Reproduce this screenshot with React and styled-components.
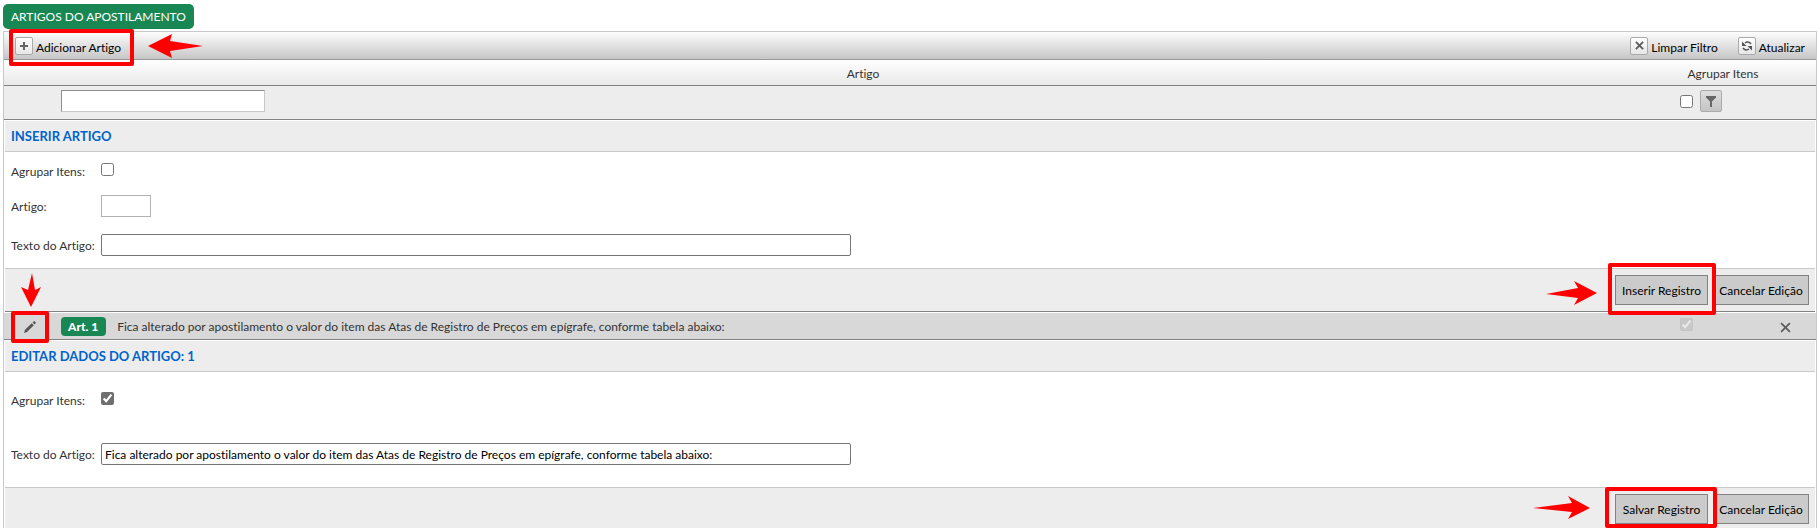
import React, { useState } from 'react';
import styled, { createGlobalStyle } from 'styled-components';

const GlobalStyle = createGlobalStyle`
  html {
    overflow: hidden;
  }
  body {
    margin: 0;
    background: #fff;
    color: #333;
    font-family: Lato, "Open Sans", sans-serif;
    font-size: 12px;
    line-height: 16px;
    font-variant-ligatures: none;
  }
  *, *::before, *::after {
    box-sizing: border-box;
  }
  input, button {
    font: inherit;
    font-variant-ligatures: none;
    margin: 0;
  }
`;

const Page = styled.main`
  padding: 4px 2px 0 3px;
`;

const SectionBadge = styled.h1`
  display: table;
  margin: 0 0 2px;
  padding: 1px 8px 0;
  border-radius: 5px;
  background: #198754;
  color: #fff;
  font-size: 12px;
  font-weight: 400;
  line-height: 24px;
`;

const Grid = styled.section`
  border: 1px solid #c9c9c9;
`;

const Toolbar = styled.div`
  display: flex;
  justify-content: space-between;
  align-items: center;
  height: 28px;
  padding: 0 11px;
  border-bottom: 1px solid #999;
  background: linear-gradient(#fdfdfd, #c6c6c6);
`;

const ToolGroup = styled.div`
  display: flex;
  gap: 20px;
`;

const ToolButton = styled.button`
  position: relative;
  display: flex;
  align-items: flex-start;
  gap: 3px;
  height: 18px;
  padding: 0;
  border: 0;
  background: none;
  color: #000;
  white-space: nowrap;

  span {
    padding-top: 3px;
  }
`;

const IconBox = styled.i`
  display: grid;
  place-items: center;
  width: 18px;
  height: 18px;
  border: 1px solid #aaa;
  border-radius: 2px;
  background: linear-gradient(#fff, #e6e6e6);
`;

const Table = styled.table`
  width: 100%;
  table-layout: fixed;
  border-collapse: separate;
  border-spacing: 0;
`;

const Col = styled.col`
  width: ${(props) => props.$width};
`;

const HeadCell = styled.th`
  height: 26px;
  padding: 2px 0 0;
  border-bottom: 1px solid #828282;
  background: linear-gradient(#fff, #e9e9e9);
  font-weight: 400;
  text-align: center;
`;

const FilterCell = styled.td`
  height: 34px;
  padding: 4px 8px 0 7px;
  border-bottom: 1px solid #828282;
  background: #ededed;
  vertical-align: top;
`;

const Cell = styled.td`
  height: 28px;
  padding: 0 8px 0 7px;
  border-top: 1px solid #fff;
  border-bottom: 1px solid #828282;
  background: #d8d8d8;
  vertical-align: middle;
`;

const FormCell = styled.td`
  padding: 1px 1px 0;
`;

const FilterInput = styled.input`
  display: block;
  width: 204px;
  height: 22px;
  margin-left: 1px;
  padding: 0 4px;
  border: 1px solid;
  border-color: #8e8e8e #c9c9c9 #c9c9c9 #8e8e8e;
  background: #fff;
`;

const FilterTools = styled.div`
  display: flex;
  align-items: center;
  gap: 7px;
`;

const Check = styled.input`
  display: block;
  flex: none;
  width: 13px;
  height: 13px;
  accent-color: #6f6f6f;

  &:disabled {
    margin-bottom: 4px;
  }
`;

const FilterButton = styled.button`
  display: grid;
  place-items: center;
  width: 22px;
  height: 22px;
  padding: 0;
  border: 1px solid #aaa;
  border-radius: 2px;
  background: linear-gradient(#dedede, #c4c4c4);
`;

const RowContent = styled.div`
  display: flex;
  align-items: center;
  gap: 11px;
  padding-left: 1px;

  span {
    padding-top: 2px;
  }
`;

const ArtBadge = styled.strong`
  padding: 0 8px 0 7px;
  border-radius: 4px;
  background: #198754;
  color: #fff;
  font-weight: 900;
  line-height: 19px;
`;

const RowButton = styled.button`
  position: relative;
  display: grid;
  place-items: center;
  width: ${(props) => props.$width};
  height: 22px;
  padding: 2px 1px 0 0;
  border: 0;
  background: none;
`;

const FormTitle = styled.h2`
  margin: 0;
  padding: 0 6px;
  border-bottom: 1px solid #c9c9c9;
  background: #ededed;
  color: #0063cc;
  font-size: 13px;
  font-weight: 700;
  line-height: 30px;
`;

const Fields = styled.div`
  display: flex;
  flex-direction: column;
  gap: ${(props) => (props.$loose ? '36px' : '17px')};
  padding: ${(props) => (props.$loose ? '17px 6px 22px' : '8px 6px 12px')};
`;

const Field = styled.div`
  display: grid;
  grid-template-columns: 90px 1fr;
  align-items: center;
  height: ${(props) => (props.$check ? '18px' : '22px')};

  label {
    padding-top: ${(props) => (props.$check ? '4px' : '2px')};
    white-space: nowrap;
  }
  ${Check} {
    margin-bottom: 2px;
  }
`;

const ShortInput = styled.input`
  width: 50px;
  height: 22px;
  border: 1px solid #b2b2b2;
`;

const LongInput = styled.input`
  width: 100%;
  max-width: 750px;
  height: 22px;
  padding: 1px 3px;
  border: 1px solid #767676;
  border-radius: 2px;
  color: #000;
`;

const FormFooter = styled.div`
  display: flex;
  justify-content: flex-end;
  gap: 5px;
  height: 44px;
  padding: 6px;
  border-top: 1px solid #c9c9c9;
  border-bottom: 1px solid #828282;
  background: #ededed;
`;

const FormButton = styled.button`
  position: relative;
  min-width: ${(props) => (props.$wide ? '96px' : '93px')};
  height: 30px;
  padding: 2px 0 0;
  border: 1px solid #828282;
  background: #cbcbcb;
  color: #000;
  white-space: nowrap;
`;

// red frame drawn over a control, grown outwards by $inset
const Frame = styled.span`
  && {
    position: absolute;
    inset: ${(props) => props.$inset};
    padding: 0;
    border: 4px solid #f00;
    border-radius: 2px;
    pointer-events: none;
    z-index: 1;
  }
`;

const ArrowSvg = styled.svg`
  position: absolute;
  ${(props) => props.$place};
  pointer-events: none;
  z-index: 2;
`;

const arrows = {
  left: { w: 55, h: 24, d: 'M55 12 L22 7 L24 0 L0 12 L24 24 L22 17 Z' },
  right: { w: 51, h: 24, d: 'M0 13 L32 7 L28 0 L51 12 L28 24 L32 17 Z' },
  longRight: { w: 57, h: 23, d: 'M0 12 L39 7 L35 0 L57 12 L35 23 L39 16 Z' },
  down: { w: 20, h: 34, d: 'M11 0 L14 17 L20 14 L10 34 L0 14 L7 17 Z' },
};

function Arrow({ kind, place }) {
  const { w, h, d } = arrows[kind];
  return (
    <ArrowSvg $place={place} width={w} height={h} viewBox={`0 0 ${w} ${h}`} fill="#f00" aria-hidden="true">
      <path d={d} />
    </ArrowSvg>
  );
}

const PlusIcon = () => (
  <svg width="10" height="10" viewBox="0 0 10 10" fill="#666">
    <path d="M4 1h2v3h3v2H6v3H4V6H1V4h3z" />
  </svg>
);

const CrossIcon = ({ size = 10, weight = 2 }) => (
  <svg width={size} height={size} viewBox="0 0 10 10" fill="none" stroke="#5a5a5a" strokeWidth={weight}>
    <path d="M1 1l8 8M9 1l-8 8" />
  </svg>
);

const RefreshIcon = () => (
  <svg width="12" height="12" viewBox="0 0 12 12" fill="none" stroke="#555" strokeWidth="1.5">
    <path d="M4 3C6 1.500 8.500 1.800 10 4M8 9C6 10.500 3.500 10.200 2 8" />
    <path d="M1 1.500v4.500h4.500zM11 10.500V6H6.500z" fill="#555" stroke="none" />
  </svg>
);

const FunnelIcon = () => (
  <svg width="12" height="12" viewBox="0 0 12 12" fill="#666">
    <path d="M1 1h10v1.500L7 6.500V12H5V6.500L1 2.500z" />
  </svg>
);

const PencilIcon = () => (
  <svg width="14" height="14" viewBox="0 0 14 14" fill="#555">
    <path d="M1 13l1-3.200L8.800 3.200l2 2L4 12z" />
    <path d="M9.600 2.400l1.600-1.400 1.800 1.800-1.400 1.600z" />
  </svg>
);

const texto = 'Fica alterado por apostilamento o valor do item das Atas de Registro de Preços em epígrafe, conforme tabela abaixo:';

const App = () => {
  const [novoAgrupar, setNovoAgrupar] = useState(false);
  const [agrupar, setAgrupar] = useState(true);
  const [textoArtigo, setTextoArtigo] = useState(texto);

  return (
    <Page>
      <GlobalStyle />
      <SectionBadge>ARTIGOS DO APOSTILAMENTO</SectionBadge>
      <Grid>
        <Toolbar>
          <ToolButton type="button">
            <IconBox><PlusIcon /></IconBox>
            <span>Adicionar Artigo</span>
            <Frame $inset="-8px -13px -11px -6px" />
            <Arrow kind="left" place="left: calc(100% + 27px); top: -3px" />
          </ToolButton>
          <ToolGroup>
            <ToolButton type="button">
              <IconBox><CrossIcon size={9} /></IconBox>
              <span>Limpar Filtro</span>
            </ToolButton>
            <ToolButton type="button">
              <IconBox><RefreshIcon /></IconBox>
              <span>Atualizar</span>
            </ToolButton>
          </ToolGroup>
        </Toolbar>

        <Table>
          <colgroup>
            <Col $width="49px" />
            <Col />
            <Col $width="100px" />
            <Col $width="43px" />
          </colgroup>
          <thead>
            <tr>
              <HeadCell />
              <HeadCell scope="col">Artigo</HeadCell>
              <HeadCell scope="col">Agrupar Itens</HeadCell>
              <HeadCell />
            </tr>
          </thead>
          <tbody>
            <tr>
              <FilterCell />
              <FilterCell>
                <FilterInput type="text" aria-label="Filtrar artigo" />
              </FilterCell>
              <FilterCell>
                <FilterTools>
                  <Check type="checkbox" aria-label="Filtrar agrupar itens" />
                  <FilterButton type="button" aria-label="Filtrar"><FunnelIcon /></FilterButton>
                </FilterTools>
              </FilterCell>
              <FilterCell />
            </tr>

            <tr>
              <FormCell colSpan={4}>
                <FormTitle>INSERIR ARTIGO</FormTitle>
                <Fields>
                  <Field $check>
                    <label htmlFor="novo-agrupar">Agrupar Itens:</label>
                    <Check
                      id="novo-agrupar"
                      type="checkbox"
                      checked={novoAgrupar}
                      onChange={(e) => setNovoAgrupar(e.target.checked)}
                    />
                  </Field>
                  <Field>
                    <label htmlFor="novo-artigo">Artigo:</label>
                    <ShortInput id="novo-artigo" type="text" />
                  </Field>
                  <Field>
                    <label htmlFor="novo-texto">Texto do Artigo:</label>
                    <LongInput id="novo-texto" type="text" />
                  </Field>
                </Fields>
                <FormFooter>
                  <FormButton type="button">
                    Inserir Registro
                    <Frame $inset="-13px -9px -11px -8px" />
                    <Arrow kind="right" place="right: calc(100% + 19px); top: 5px" />
                  </FormButton>
                  <FormButton type="button" $wide>Cancelar Edição</FormButton>
                </FormFooter>
              </FormCell>
            </tr>

            <tr>
              <Cell>
                <RowButton type="button" $width="38px" aria-label="Editar">
                  <PencilIcon />
                  <Frame $inset="-4px 0 -6px 0" />
                  <Arrow kind="down" place="left: 10px; bottom: calc(100% + 8px)" />
                </RowButton>
              </Cell>
              <Cell>
                <RowContent>
                  <ArtBadge>Art. 1</ArtBadge>
                  <span>{texto}</span>
                </RowContent>
              </Cell>
              <Cell>
                <Check type="checkbox" checked disabled readOnly aria-label="Agrupar itens" />
              </Cell>
              <Cell>
                <RowButton type="button" $width="12px" aria-label="Excluir">
                  <CrossIcon size={11} weight={1.5} />
                </RowButton>
              </Cell>
            </tr>

            <tr>
              <FormCell colSpan={4}>
                <FormTitle>EDITAR DADOS DO ARTIGO: 1</FormTitle>
                <Fields $loose>
                  <Field $check>
                    <label htmlFor="agrupar">Agrupar Itens:</label>
                    <Check
                      id="agrupar"
                      type="checkbox"
                      checked={agrupar}
                      onChange={(e) => setAgrupar(e.target.checked)}
                    />
                  </Field>
                  <Field>
                    <label htmlFor="texto">Texto do Artigo:</label>
                    <LongInput
                      id="texto"
                      type="text"
                      value={textoArtigo}
                      onChange={(e) => setTextoArtigo(e.target.value)}
                    />
                  </Field>
                </Fields>
                <FormFooter>
                  <FormButton type="button">
                    Salvar Registro
                    <Frame $inset="-8px -10px -5px -11px" />
                    <Arrow kind="longRight" place="right: calc(100% + 26px); top: 1px" />
                  </FormButton>
                  <FormButton type="button" $wide>Cancelar Edição</FormButton>
                </FormFooter>
              </FormCell>
            </tr>
          </tbody>
        </Table>
      </Grid>
    </Page>
  );
};

export default App;
